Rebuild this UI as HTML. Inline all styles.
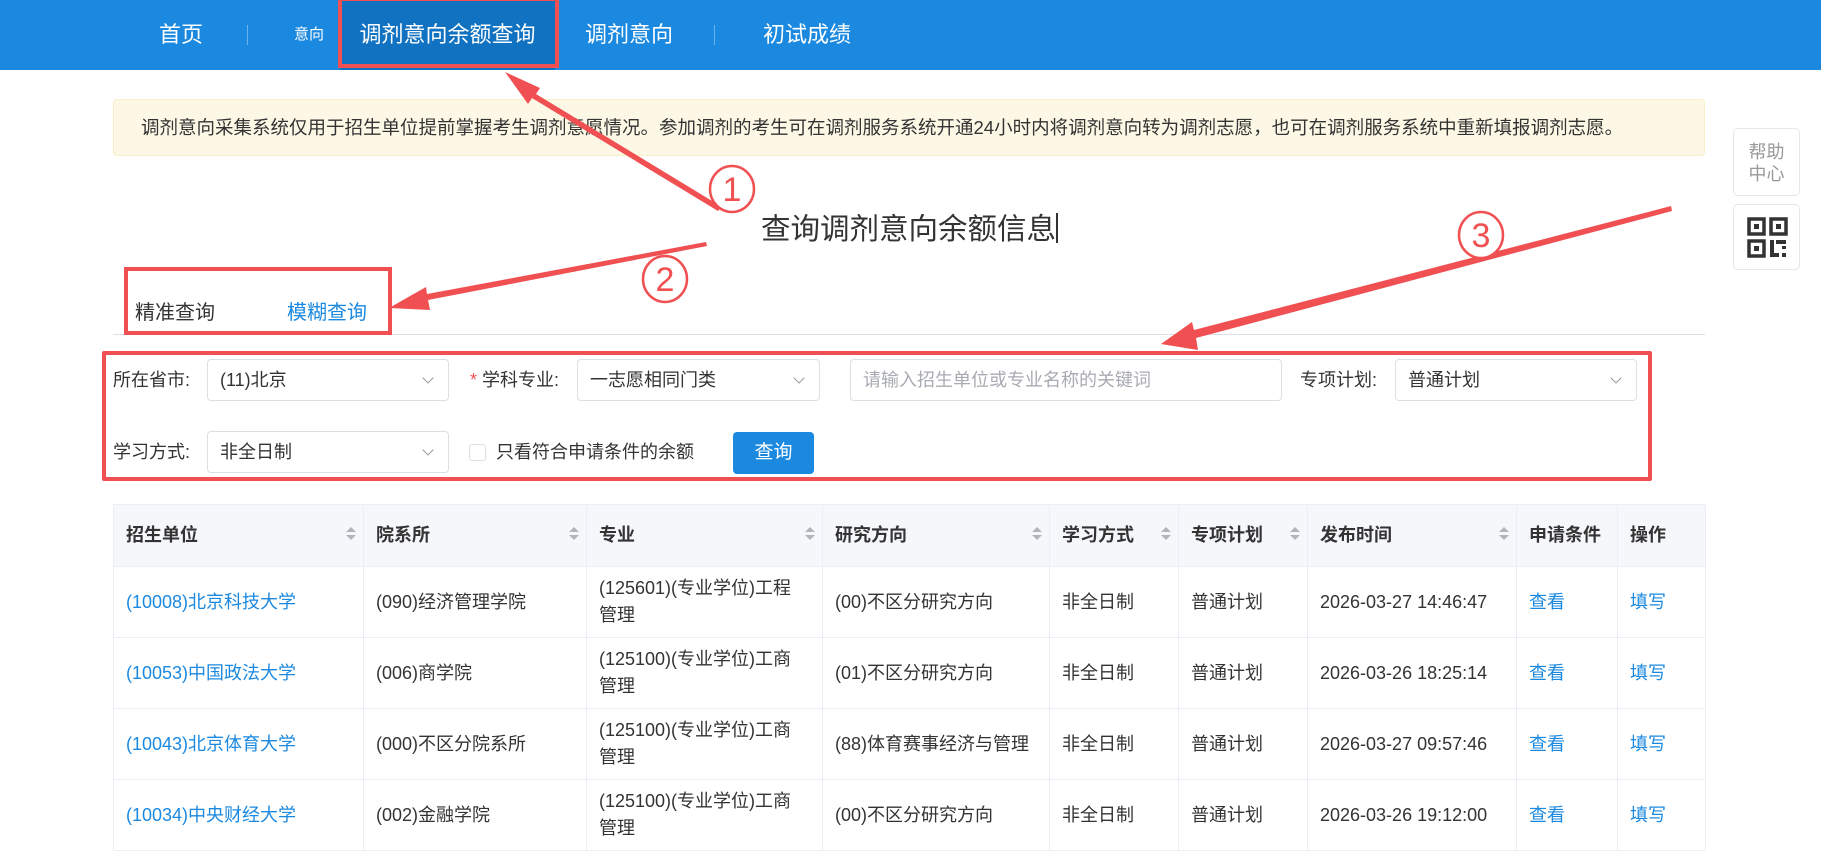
<!DOCTYPE html>
<html><head><meta charset="utf-8">
<style>
*{margin:0;padding:0;box-sizing:border-box}
body{width:1821px;height:840px;overflow:hidden;background:#fff;font-family:"Liberation Sans","Noto Sans CJK SC",sans-serif;color:#333;position:relative}
.a{position:absolute;white-space:nowrap}
.nav{position:absolute;left:0;top:0;width:1821px;height:70px;background:#1b89e0}
.nav .t{position:absolute;top:0;height:70px;line-height:70px;color:#fff;font-size:22px}
.dv{position:absolute;top:25px;width:1px;height:20px;background:rgba(255,255,255,.35)}
.sel{position:absolute;height:42px;border:1px solid #dcdfe6;border-radius:4px;font-size:18px;line-height:40px;padding-left:12px;color:#333;background:#fff}
.sel:after{content:"";position:absolute;right:16px;top:14px;width:7px;height:7px;border-right:1.5px solid #999;border-bottom:1.5px solid #999;transform:rotate(45deg)}
.sel.n:after{display:none}
.lbl{position:absolute;font-size:18px;line-height:42px;color:#333}
table{position:absolute;left:113px;top:504px;border-collapse:collapse;table-layout:fixed;width:1592px}
td,th{border:1px solid #ebeef5;font-size:18px;padding:0 12px;text-align:left;vertical-align:middle;line-height:27px;position:relative;white-space:nowrap}
th{background:#f5f7fa;height:62px;font-weight:bold;color:#333}
td{height:71px}
.lk{color:#1b89e0}
.s{position:absolute;right:12px;top:24px;width:0;height:0}
.s:before{content:"";position:absolute;left:-5px;top:-2px;border:5px solid transparent;border-bottom:5px solid #b0b4bb;border-top:0}
.s:after{content:"";position:absolute;left:-5px;top:6px;border:5px solid transparent;border-top:5px solid #b0b4bb;border-bottom:0}
</style></head><body>
<div class="nav">
<div class="t" style="left:159px">首页</div>
<div class="dv" style="left:247px"></div>
<div class="t" style="left:294px;font-size:15px">意向</div>
<div class="t" style="left:340px;width:215px;background:#1272c2;text-align:center">调剂意向余额查询</div>
<div class="t" style="left:585px">调剂意向</div>
<div class="dv" style="left:714px"></div>
<div class="t" style="left:763px">初试成绩</div>
</div>
<div class="a" style="left:338px;top:0;width:221px;height:68px;border:4px solid #f05052;border-top:1px solid #f05052"></div>

<div class="a" style="left:113px;top:99px;width:1592px;height:57px;background:#fdf8e6;border:1px solid #f8eec8;border-radius:4px;font-size:18.5px;line-height:55px;padding-left:27px">调剂意向采集系统仅用于招生单位提前掌握考生调剂意愿情况。参加调剂的考生可在调剂服务系统开通24小时内将调剂意向转为调剂志愿，也可在调剂服务系统中重新填报调剂志愿。</div>

<div class="a" style="left:761px;top:211px;font-size:29.5px;line-height:38px;color:#333">查询调剂意向余额信息<span style="display:inline-block;width:2px;height:30px;background:#333;vertical-align:-4px"></span></div>

<div class="a" style="left:135px;top:296px;font-size:20px">精准查询</div>
<div class="a" style="left:287px;top:296px;font-size:20px;color:#1b89e0">模糊查询</div>
<div class="a" style="left:113px;top:334px;width:1592px;height:1px;background:#dcdfe6"></div>
<div class="a" style="left:124px;top:267px;width:268px;height:68px;border:4px solid #f05052"></div>

<div class="lbl" style="left:113px;top:359px">所在省市:</div>
<div class="sel" style="left:207px;top:359px;width:242px">(11)北京</div>
<div class="lbl" style="left:470px;top:359px"><span style="color:#f05052">*</span> 学科专业:</div>
<div class="sel" style="left:577px;top:359px;width:243px">一志愿相同门类</div>
<div class="sel n" style="left:850px;top:359px;width:432px;color:#a8abb2">请输入招生单位或专业名称的关键词</div>
<div class="lbl" style="left:1300px;top:359px">专项计划:</div>
<div class="sel" style="left:1395px;top:359px;width:242px">普通计划</div>
<div class="lbl" style="left:113px;top:431px">学习方式:</div>
<div class="sel" style="left:207px;top:431px;width:242px">非全日制</div>
<div class="a" style="left:469px;top:444px;width:17px;height:17px;border:1px solid #dcdfe6;border-radius:3px"></div>
<div class="lbl" style="left:496px;top:431px">只看符合申请条件的余额</div>
<div class="a" style="left:733px;top:432px;width:81px;height:42px;background:#1b89e0;border-radius:4px;color:#fff;font-size:19px;line-height:42px;text-align:center">查询</div>
<div class="a" style="left:102px;top:351px;width:1550px;height:130px;border:4px solid #f05052;border-radius:2px"></div>

<table>
<colgroup><col style="width:250px"><col style="width:223px"><col style="width:236px"><col style="width:227px"><col style="width:129px"><col style="width:129px"><col style="width:209px"><col style="width:101px"><col style="width:88px"></colgroup>
<tr><th>招生单位<i class="s"></i></th><th>院系所<i class="s"></i></th><th>专业<i class="s"></i></th><th>研究方向<i class="s"></i></th><th>学习方式<i class="s"></i></th><th>专项计划<i class="s"></i></th><th>发布时间<i class="s"></i></th><th>申请条件</th><th>操作</th></tr>
<tr><td class="lk">(10008)北京科技大学</td><td>(090)经济管理学院</td><td>(125601)(专业学位)工程<br>管理</td><td>(00)不区分研究方向</td><td>非全日制</td><td>普通计划</td><td>2026-03-27 14:46:47</td><td class="lk">查看</td><td class="lk">填写</td></tr>
<tr><td class="lk">(10053)中国政法大学</td><td>(006)商学院</td><td>(125100)(专业学位)工商<br>管理</td><td>(01)不区分研究方向</td><td>非全日制</td><td>普通计划</td><td>2026-03-26 18:25:14</td><td class="lk">查看</td><td class="lk">填写</td></tr>
<tr><td class="lk">(10043)北京体育大学</td><td>(000)不区分院系所</td><td>(125100)(专业学位)工商<br>管理</td><td>(88)体育赛事经济与管理</td><td>非全日制</td><td>普通计划</td><td>2026-03-27 09:57:46</td><td class="lk">查看</td><td class="lk">填写</td></tr>
<tr><td class="lk">(10034)中央财经大学</td><td>(002)金融学院</td><td>(125100)(专业学位)工商<br>管理</td><td>(00)不区分研究方向</td><td>非全日制</td><td>普通计划</td><td>2026-03-26 19:12:00</td><td class="lk">查看</td><td class="lk">填写</td></tr>
</table>

<div class="a" style="left:1733px;top:128px;width:67px;height:68px;border:1px solid #e4e7ed;border-radius:5px;color:#999;font-size:18px;line-height:22px;text-align:center;padding-top:12px;white-space:normal">帮助<br>中心</div>
<div class="a" style="left:1733px;top:204px;width:67px;height:66px;border:1px solid #e4e7ed;border-radius:5px">
<svg width="67" height="66" viewBox="0 0 67 66"><g fill="none" stroke="#333" stroke-width="3.5"><rect x="15" y="14" width="15" height="15"/><rect x="37" y="14" width="15" height="15"/><rect x="15" y="36" width="15" height="15"/></g><g fill="#333"><rect x="20" y="19" width="5" height="5"/><rect x="42" y="19" width="5" height="5"/><rect x="20" y="41" width="5" height="5"/><rect x="36" y="35" width="4" height="17"/><rect x="36" y="48" width="9" height="4"/><rect x="42" y="35" width="10" height="4"/><rect x="48" y="41" width="4" height="3"/><rect x="48" y="48" width="4" height="4"/></g></svg></div>

<svg class="a" style="left:0;top:0" width="1821" height="840">
<g fill="#f05052">
<polygon points="718,211 722,207 536,94 540,88 505,72 528,104 532,98"/>
<polygon points="706,242 707,246 428,300 430,310 389,308 426,287 427,294"/>
<polygon points="1671,206 1672,211 1196,338 1198,350 1161,344 1192,322 1194,330"/>
</g>
<g fill="#fff" stroke="#f05052" stroke-width="2.5"><ellipse cx="732" cy="189" rx="22" ry="23"/><ellipse cx="665" cy="279" rx="22" ry="23"/><ellipse cx="1481" cy="235" rx="22" ry="23"/></g>
<g fill="#f05052" font-family="Liberation Sans,sans-serif" font-size="34" text-anchor="middle"><text x="732" y="201">1</text><text x="665" y="291">2</text><text x="1481" y="247">3</text></g>
</svg>
</body></html>
